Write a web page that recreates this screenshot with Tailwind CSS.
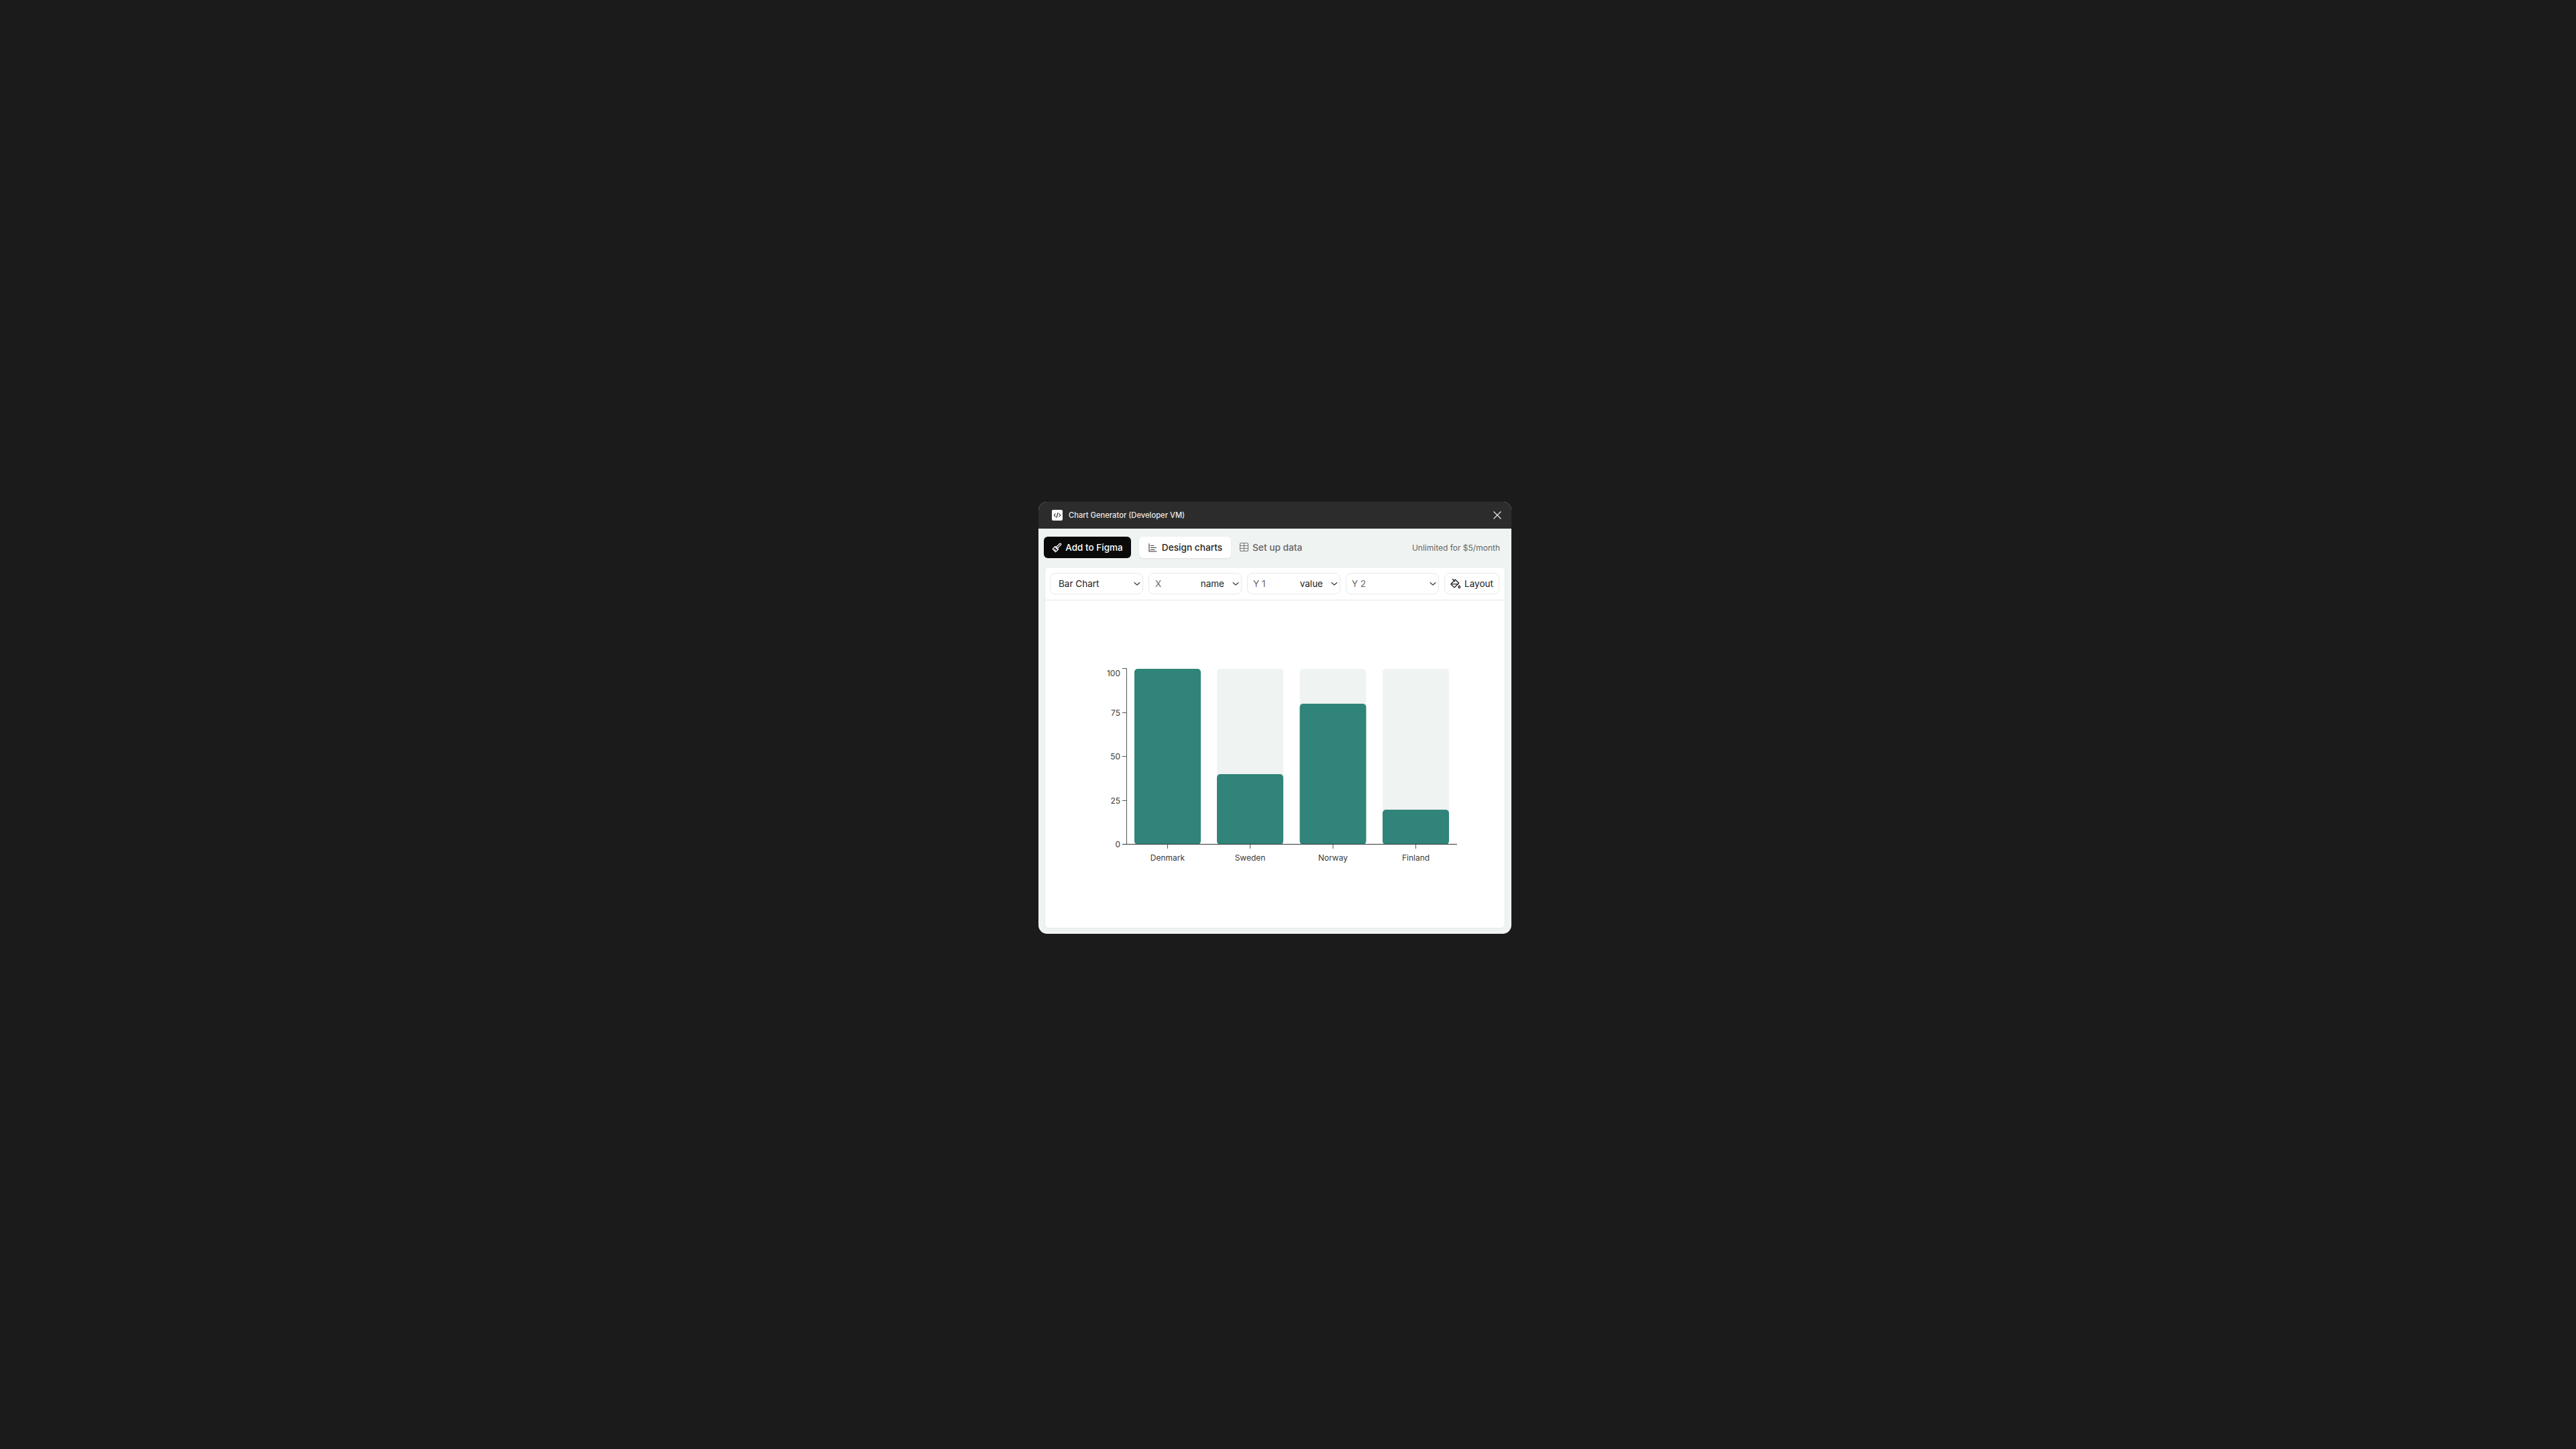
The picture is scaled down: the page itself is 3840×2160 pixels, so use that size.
<!DOCTYPE html>
<html lang="en">
<head>
    <meta charset="UTF-8">
    <title>Chart Generator (Developer VM)</title>
    <script src="https://cdn.jsdelivr.net/npm/@tailwindcss/browser@4"></script>
</head>
<body class="bg-[#1b1b1b] w-[3840px] h-[2160px] overflow-hidden font-['Inter','Liberation_Sans',sans-serif]">
    <div class="pt-[748px] pl-[1548px]">
        <!-- plugin window -->
        <div class="w-[705px] h-[644px] rounded-[13px] overflow-hidden flex flex-col bg-[#eff3f2]">
            <!-- title bar -->
            <header class="h-[40px] bg-[#2c2c2c] flex items-center pl-[20px] pr-[14px] shrink-0">
                <div class="w-[16px] h-[16px] bg-white rounded-[2px] flex items-center justify-center">
                    <svg width="12" height="12" viewBox="0 0 12 12" fill="none" stroke="#222" stroke-width="1.1" stroke-linecap="round" stroke-linejoin="round"><path d="M3.2 3.8 1.2 6l2 2.2M8.8 3.8l2 2.2-2 2.2M7 2.5 5 9.5"/></svg>
                </div>
                <span class="ml-[9px] mt-[1px] text-[11.2px] font-medium text-[#e8e8e8]">Chart Generator (Developer VM)</span>
                <svg class="ml-auto" width="14" height="14" viewBox="0 0 14 14" fill="none" stroke="#f0f0f0" stroke-width="1.1"><path d="M1.5 1.5l11 11M12.5 1.5l-11 11"/></svg>
            </header>

            <div class="flex-1 flex flex-col px-[8px] pb-[8px] min-h-0">
                <!-- tabs -->
                <div class="h-[32px] mt-[12px] mb-[13px] flex items-center shrink-0">
                    <button class="w-[130px] h-[32px] bg-[#0a0a0a] text-white rounded-[6px] flex items-center justify-center gap-[5px] text-[13.5px] font-medium">
                        <svg width="15" height="15" viewBox="0 0 24 24" fill="none" stroke="#fff" stroke-width="2" stroke-linecap="round" stroke-linejoin="round"><path d="m14.6 12.2 6.9-7.1a2 2 0 0 0-2.8-2.8l-7 6.9"/><path d="m7.8 10.6 5.6 5.6"/><path d="M9.2 9.2 14.8 14.8c.5.5.5 1.2 0 1.7l-6 5.5-7-7 5.7-5.8c.5-.5 1.2-.5 1.7 0Z"/><path d="M6 16l2.5 2.5"/></svg>
                        <span class="mt-[1px]">Add to Figma</span>
                    </button>
                    <button class="ml-[12px] w-[137px] h-[32px] bg-white text-[#1f1f1f] rounded-[6px] shadow-[0_1px_2px_rgba(0,0,0,0.08)] flex items-center justify-center gap-[6px] text-[13.7px] font-medium">
                        <svg width="15" height="15" viewBox="0 0 15 15" fill="none" stroke="#333" stroke-width="1.1" stroke-linecap="round"><path d="M2 1.5v11.5h11"/><path d="M4.5 4.5h4M4.5 7.5h8M4.5 10.5h5.5"/></svg>
                        <span class="mt-[1px]">Design charts</span>
                    </button>
                    <div class="ml-[12px] flex items-center gap-[5px] text-[13.7px] font-medium text-[#666]">
                        <svg width="15" height="15" viewBox="0 0 15 15" fill="none" stroke="#777" stroke-width="1.1"><rect x="1.5" y="1.5" width="12" height="12" rx="2"/><path d="M1.5 5.5h12M1.5 9.5h12M7.5 1.5v12"/></svg>
                        <span class="mt-[1px]">Set up data</span>
                    </div>
                    <span class="ml-auto mr-[9px] mt-[1px] text-[12px] text-[#666]">Unlimited for $5/month</span>
                </div>

                <!-- main card -->
                <div class="mx-[1px] flex-1 min-h-0 bg-white border border-[#e6eaea] rounded-[6px] flex flex-col">
                    <div class="h-[49px] shrink-0 border-b border-[#e3e7e7] pl-[7px] flex items-center gap-[8px] text-[13.5px]">
                        <div class="w-[139px] h-[32px] border border-[#e6eaea] rounded-[8px] flex items-center pl-[12px] pr-[2px] text-[#222]">
                            <span>Bar Chart</span>
                            <svg class="ml-auto" width="12" height="12" viewBox="0 0 12 12" fill="none" stroke="#333" stroke-width="1.1" stroke-linecap="round" stroke-linejoin="round"><path d="M2 4.5 6 8l4-3.5"/></svg>
                        </div>
                        <div class="w-[139px] h-[32px] border border-[#e6eaea] rounded-[8px] flex items-center pl-[9px] pr-[2px]">
                            <span class="text-[#666]">X</span>
                            <span class="ml-auto mr-[11px] text-[#222]">name</span>
                            <svg width="12" height="12" viewBox="0 0 12 12" fill="none" stroke="#333" stroke-width="1.1" stroke-linecap="round" stroke-linejoin="round"><path d="M2 4.5 6 8l4-3.5"/></svg>
                        </div>
                        <div class="w-[139px] h-[32px] border border-[#e6eaea] rounded-[8px] flex items-center pl-[8px] pr-[2px]">
                            <span class="text-[#666]">Y 1</span>
                            <span class="ml-auto mr-[11px] text-[#222]">value</span>
                            <svg width="12" height="12" viewBox="0 0 12 12" fill="none" stroke="#333" stroke-width="1.1" stroke-linecap="round" stroke-linejoin="round"><path d="M2 4.5 6 8l4-3.5"/></svg>
                        </div>
                        <div class="w-[139px] h-[32px] border border-[#e6eaea] rounded-[8px] flex items-center pl-[8px] pr-[2px]">
                            <span class="text-[#666]">Y 2</span>
                            <svg class="ml-auto" width="12" height="12" viewBox="0 0 12 12" fill="none" stroke="#333" stroke-width="1.1" stroke-linecap="round" stroke-linejoin="round"><path d="M2 4.5 6 8l4-3.5"/></svg>
                        </div>
                        <div class="w-[82px] h-[32px] border border-[#e6eaea] rounded-[8px] flex items-center justify-center gap-[5px] text-[#222]">
                            <svg width="16" height="16" viewBox="0 0 24 24" fill="none" stroke="#222" stroke-width="2" stroke-linecap="round" stroke-linejoin="round"><path d="m19 11-8-8-8.6 8.6a2 2 0 0 0 0 2.8l5.2 5.2c.8.8 2 .8 2.8 0L19 11Z"/><path d="m5 2 5 5"/><path d="M2 13h15"/><path d="M22 20a2 2 0 1 1-4 0c0-1.6 1.7-2.4 2-4 .3 1.6 2 2.4 2 4Z"/></svg>
                            Layout
                        </div>
                    </div>

                    <!-- chart -->
                    <svg class="block" width="685" height="488" viewBox="0 0 685 488" font-family="Inter, Liberation Sans, sans-serif" font-size="12" fill="#3a3a3a">
                        <rect x="133" y="102" width="99" height="262" rx="5" fill="#eff3f2"/>
                        <rect x="256" y="102" width="99" height="262" rx="5" fill="#eff3f2"/>
                        <rect x="379.5" y="102" width="99" height="262" rx="5" fill="#eff3f2"/>
                        <rect x="503" y="102" width="99" height="262" rx="5" fill="#eff3f2"/>

                        <rect x="133" y="102" width="99" height="262" rx="5" fill="#30847a"/>
                        <rect x="256" y="259" width="99" height="105" rx="5" fill="#30847a"/>
                        <rect x="379.5" y="154" width="99" height="210" rx="5" fill="#30847a"/>
                        <rect x="503" y="312" width="99" height="52" rx="5" fill="#30847a"/>

                        <g fill="none" stroke="#555" stroke-width="1">
                            <path d="M115 101.5h6.5v262.5"/>
                            <path d="M115 167.5h6M115 232.5h6M115 298.5h6"/>
                            <path d="M115 363.5h499" stroke="#333"/>
                            <path d="M182.5 364v6M305.5 364v6M429 364v6M552.5 364v6"/>
                        </g>

                        <g text-anchor="end">
                            <text x="112" y="112.5">100</text>
                            <text x="112" y="171.5">75</text>
                            <text x="112" y="236.5">50</text>
                            <text x="112" y="302.5">25</text>
                            <text x="112" y="367.5">0</text>
                        </g>
                        <g text-anchor="middle">
                            <text x="182.5" y="387.5">Denmark</text>
                            <text x="305.5" y="387.5">Sweden</text>
                            <text x="429" y="387.5">Norway</text>
                            <text x="552.5" y="387.5">Finland</text>
                        </g>
                    </svg>
                </div>
            </div>
        </div>
    </div>
</body>
</html>
